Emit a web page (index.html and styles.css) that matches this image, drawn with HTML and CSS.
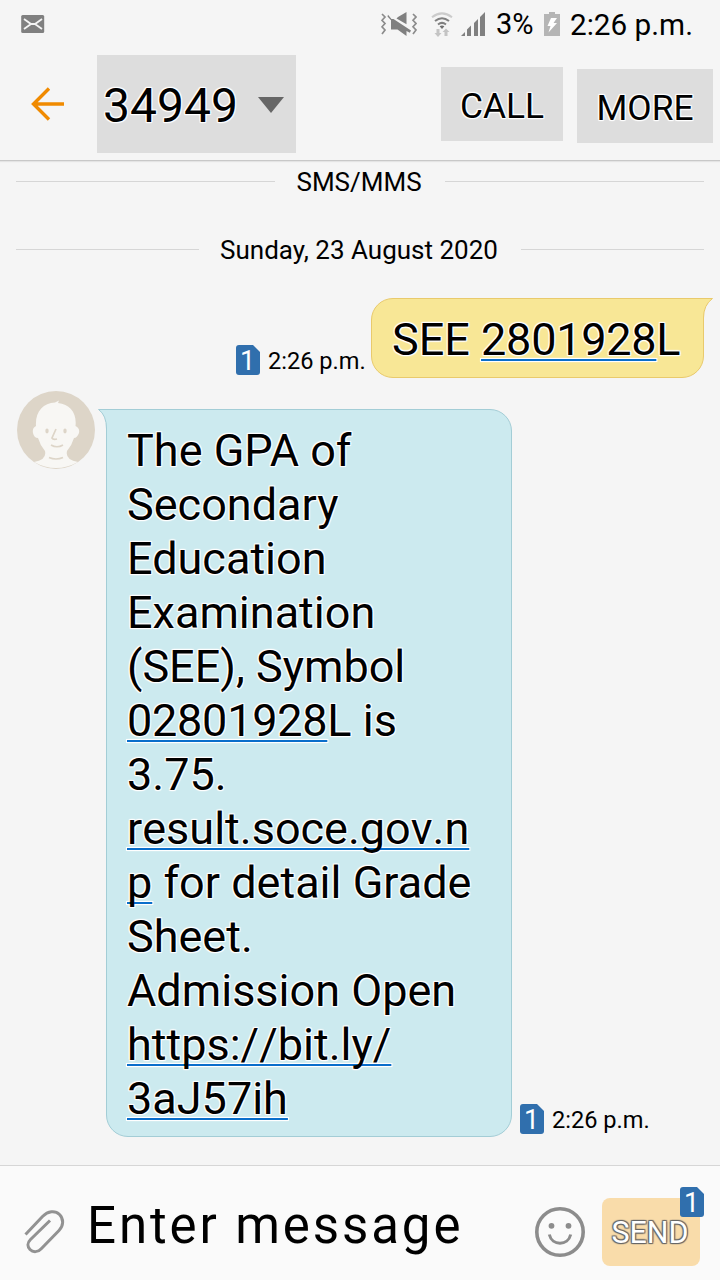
FILE: index.html
```
<!DOCTYPE html>
<html lang="en">

<head>
    <meta charset="UTF-8">
    <meta name="viewport" content="width=device-width, initial-scale=1.0">
    <title>34949</title>
    <link rel="stylesheet" href="styles.css">
</head>

<body>
    <div class="phone">
        <div class="status-bar">
            <svg class="mail-icon" width="24" height="18" viewBox="0 0 24 18">
                <rect x="0.2" y="0" width="23" height="18" rx="1.5" fill="#808080" />
                <path d="M3 4l7 5h4l7-5M3 14l7-5M21 14l-7-5" fill="none" stroke="#f4f4f4" stroke-width="1.8" />
            </svg>
            <div class="status-right">
                <svg class="mute-icon" width="36" height="24" viewBox="0 0 36 24">
                    <g fill="none" stroke="#8c8c8c" stroke-width="1.7">
                        <path d="M1 2l3 3-3 3.300 3 3.200-3 3.300 3 3.200-3 4" />
                        <path d="M32 2l3 3-3 3.300 3 3.200-3 3.300 3 3.200-3 4" />
                    </g>
                    <path d="M17 5l8.500-5v12.300L15.500 6.500z" fill="#808080" />
                    <path d="M7 2.800l3.500 4.200h2l17.500 11.500-1.200 2.200-3.300-1.700v5L16.500 17.500H10v-9.200L6.500 4.500z" fill="#808080" />
                </svg>
                <svg class="wifi-icon" width="22" height="26" viewBox="0 0 22 26">
                    <path d="M1 5.300Q11-2.500 21 5.300" fill="none" stroke="#cbcbcb" stroke-width="2" />
                    <path d="M4 9q7-5.500 14 0M7 12.500q4-3.200 8 0" fill="none" stroke="#808080" stroke-width="2" />
                    <path d="M8.600 14.300q2.400-1.600 4.800 0L11 17z" fill="#707070" />
                    <path d="M5.500 17h3v4h2L7 25l-3.500-4h2zM13.500 24h3v-4h2L15 16.500 11.500 20h2z" fill="#c4c4c4" />
                </svg>
                <svg class="signal-icon" width="24" height="24" viewBox="0 0 24 24">
                    <path d="M0 24l4-4v4zM6 24v-6.500l4-4V24zM13 24V11l4-4v17zM19 24V5l5-5v24z" fill="#808080" />
                </svg>
                <span class="percent">3%</span>
                <svg class="battery-icon" width="16" height="24" viewBox="0 0 16 24">
                    <path d="M0 2h5V0h6v2h5v22H0z" fill="#b5b5b5" />
                    <path d="M7 6h6L9.500 11H13L4.500 20.500 6.500 14H3.500z" fill="#fff" />
                </svg>
                <span class="clock">2:26 p.m.</span>
            </div>
        </div>

        <header class="header">
            <svg class="back-icon" width="34" height="34" viewBox="0 0 34 34">
                <path d="M33 17H3M18 1.500L2.500 17 18 32.500" fill="none" stroke="#f08a00" stroke-width="3.400" />
            </svg>
            <div class="contact">
                <span>34949</span>
                <svg width="26" height="16" viewBox="0 0 26 16">
                    <path d="M0 0h26L13 16z" fill="#666" />
                </svg>
            </div>
            <div class="btn call">CALL</div>
            <div class="btn more">MORE</div>
        </header>

        <main class="messages">
            <div class="divider type">SMS/MMS</div>
            <div class="divider date">Sunday, 23 August 2020</div>

            <div class="row sent">
                <div class="meta">
                    <span class="sim">1</span>
                    <span class="time">2:26 p.m.</span>
                </div>
                <div class="bubble bubble-out">
                    SEE <span class="link number">2801928</span>L
                    <svg class="tail" width="10" height="26" viewBox="0 0 10 26">
                        <path d="M0 0.500H9.500Q0.500 7 0.500 20V26H0z" fill="#f8e796" />
                        <path d="M0 0.500H9.500Q0.500 7 0.500 20V26" fill="none" stroke="#e9ca6c" />
                    </svg>
                </div>
            </div>

            <div class="row received">
                <svg class="avatar" width="80" height="80" viewBox="0 0 80 80">
                    <circle cx="40" cy="40" r="39" fill="#ddd5c8" />
                    <path d="M20 36C19 22 27 13 39 12.500L43 10.500 42 13C54 14 61 23 59.500 36Q64 38 63 43 61 48 58 48 56 55 51 61 49 70 62 72Q40 84 18 72 31 70 29 61 24 55 22 48 18 48 17 43 16 38 20 36z" fill="#f8f7f4" />
                    <ellipse cx="31" cy="41" rx="1.700" ry="2.400" fill="#ddd5c8" />
                    <ellipse cx="49" cy="41" rx="1.700" ry="2.400" fill="#ddd5c8" />
                    <path d="M40 39l-4 9q1 2 5 1M35 55q6 3.500 12 0M33 67.500q7 3 14 0" fill="none" stroke="#ddd5c8" stroke-width="1.700" />
                </svg>
                <div class="bubble bubble-in">
                    <svg class="tail" width="10" height="28" viewBox="0 0 10 28">
                        <path d="M10 0.500H0.500Q8.500 6 8.500 20V28H10z" fill="#cceaef" />
                        <path d="M10 0.500H0.500Q8.500 6 8.500 20V28" fill="none" stroke="#a3cdd6" />
                    </svg>
                    The GPA of<br>
                    Secondary<br>
                    Education<br>
                    Examination<br>
                    (SEE), Symbol<br>
                    <span class="link number">02801928</span>L is<br>
                    3.75.<br>
                    <span class="link">result.soce.gov.n<br>p</span> for detail Grade<br>
                    Sheet.<br>
                    Admission Open<br>
                    <span class="link">https://bit.ly/<br>3aJ57ih</span>
                </div>
                <div class="meta">
                    <span class="sim">1</span>
                    <span class="time">2:26 p.m.</span>
                </div>
            </div>
        </main>

        <footer class="composer">
            <svg class="clip-icon" width="42" height="44" viewBox="0 0 42 44">
                <path d="M1.500 24.500L18.500 6.500C24 1 31 0 35.500 4.500 40 9 39.500 16 35 20.500L17.500 38.500C14 42.500 9 42.500 6 39.500 3 36.500 3.500 32.500 6.500 29.500L26 10.500" fill="none" stroke="#929292" stroke-width="3" />
            </svg>
            <div class="input">Enter message</div>
            <svg class="smile-icon" width="50" height="50" viewBox="0 0 50 50">
                <circle cx="25" cy="25" r="23.200" fill="none" stroke="#8c8c8c" stroke-width="3.600" />
                <circle cx="16.500" cy="18.800" r="2.900" fill="#8c8c8c" />
                <circle cx="33.500" cy="18.800" r="2.900" fill="#8c8c8c" />
                <path d="M14.300 27.500C17 39 33 39 35.700 27.500" fill="none" stroke="#8c8c8c" stroke-width="3" />
            </svg>
            <div class="send">SEND<span class="sim">1</span></div>
        </footer>
    </div>
</body>

</html>
```
FILE: styles.css
```
* {
    box-sizing: border-box;
}

body {
    margin: 0;
    background-color: #f5f5f5;
    color: #000;
    font-family: Roboto, "Noto Sans", sans-serif;
}

svg {
    display: block;
    flex-shrink: 0;
}

.phone {
    display: flex;
    flex-direction: column;
    width: 720px;
    height: 1280px;
    overflow: hidden;
}

.status-bar {
    display: flex;
    justify-content: space-between;
    height: 55px;
    padding: 0 26px 0 21px;
}

.mail-icon {
    margin-top: 15px;
}

.status-right {
    display: flex;
    align-items: flex-start;
    font-size: 29.7px;
    line-height: 34px;
    white-space: nowrap;
}

.status-right svg {
    margin-top: 12px;
}

.mute-icon {
    margin-right: 14px;
}

.wifi-icon {
    margin-right: 8px;
}

.percent {
    width: 43px;
    margin: 7px 5px 0 11px;
    font-size: 29px;
}

.clock {
    width: 124px;
    margin: 8px 0 0 10px;
}

.header {
    display: flex;
    align-items: flex-start;
    height: 106px;
    padding: 0 7px 0 31px;
    border-bottom: 1px solid #c8c8c8;
    box-shadow: 0 1px 1px #e4e4e4;
}

.back-icon {
    margin-top: 32px;
}

.contact {
    display: flex;
    align-items: center;
    justify-content: space-between;
    width: 199px;
    height: 98px;
    margin: 0 auto 0 32px;
    padding: 2px 12px 0 6px;
    background-color: #ddd;
    font-size: 48px;
}

.contact,
.btn,
.bubble {
    text-shadow: -1px -1px 1px #fff, 1px -1px 1px #fff, -1px 1px 1px #fff, 1px 1px 1px #fff, 0 0 2px #fff, 0 0 2px #fff;
}

.btn {
    height: 74px;
    background-color: #ddd;
    font-size: 35.4px;
    line-height: 79px;
    text-align: center;
}

.call {
    width: 122px;
    margin: 12px 14px 0 0;
}

.more {
    width: 136px;
    margin-top: 14px;
}

.messages {
    flex: 1;
}

.divider {
    display: flex;
    align-items: center;
    height: 30px;
    padding: 0 16px;
    font-size: 26px;
    white-space: nowrap;
}

.divider::before,
.divider::after {
    content: "";
    flex: 1;
    height: 1px;
    margin-bottom: 2px;
    background-color: #d6d6d6;
}

.divider::before {
    margin-right: 21px;
}

.divider::after {
    margin-left: 23px;
}

.type {
    margin-top: 6px;
}

.date {
    margin-top: 38px;
}

.row {
    display: flex;
}

.sent {
    justify-content: flex-end;
    align-items: flex-end;
    margin-top: 33px;
    padding-right: 16px;
}

.meta {
    display: flex;
    align-items: center;
    gap: 8px;
    height: 32px;
    font-size: 23.6px;
    white-space: nowrap;
}

.sent .meta {
    margin-right: 7px;
    margin-bottom: 2px;
}

.time {
    width: 96px;
    padding-top: 1px;
}

.sim {
    width: 24px;
    height: 30px;
    background-color: #306fad;
    border-radius: 3px;
    clip-path: polygon(0 0, 17px 0, 100% 7px, 100% 100%, 0 100%);
    color: #fff;
    font-size: 27px;
    line-height: 32px;
    text-align: center;
    text-indent: -1px;
}

.bubble {
    position: relative;
    border: 1px solid;
    font-size: 45px;
    line-height: 54px;
    white-space: nowrap;
}

.bubble-out {
    width: 333px;
    height: 80px;
    padding: 14px 20px 0;
    background-color: #f8e796;
    border-color: #e9ca6c;
    border-radius: 22px 0 22px 22px;
}

.bubble-in {
    width: 406px;
    height: 728px;
    margin: 19px 8px 0 10px;
    padding: 14px 20px 0;
    background-color: #cceaef;
    border-color: #a3cdd6;
    border-radius: 0 22px 22px 22px;
}

.tail {
    position: absolute;
    top: -1px;
}

.bubble-out .tail {
    right: -10px;
}

.bubble-in .tail {
    left: -9px;
}

.link {
    font-kerning: none;
    text-decoration: underline 2px #0a6ecb;
    text-decoration-skip-ink: none;
    text-underline-offset: 4px;
}

.number {
    letter-spacing: -0.25px;
}

.received {
    margin-top: 12px;
    padding-left: 16px;
}

.received .meta {
    align-self: flex-end;
    margin-bottom: 2px;
}

.composer {
    display: flex;
    align-items: flex-start;
    height: 115px;
    padding: 0 20px 0 24px;
    background-color: #fafafa;
    border-top: 1px solid #d6d6d6;
}

.clip-icon {
    margin-top: 44px;
}

.input {
    flex: 1;
    margin: 30px 0 0 21px;
    font-size: 51px;
    line-height: 60px;
    letter-spacing: 2.9px;
    white-space: nowrap;
}

.smile-icon {
    margin-top: 41px;
}

.send {
    position: relative;
    width: 98px;
    height: 68px;
    margin: 32px 0 0 17px;
    background-color: #f9dcaa;
    border-radius: 8px;
    color: #fff;
    font-size: 30.5px;
    line-height: 70px;
    text-align: center;
    text-indent: -2px;
    text-shadow: -1px -1px 1px #666, 1px -1px 1px #666, -1px 1px 1px #666, 1px 1px 1px #666, 0 0 1px #666;
}

.send .sim {
    position: absolute;
    top: -11px;
    right: -4px;
    text-shadow: none;
}
```
